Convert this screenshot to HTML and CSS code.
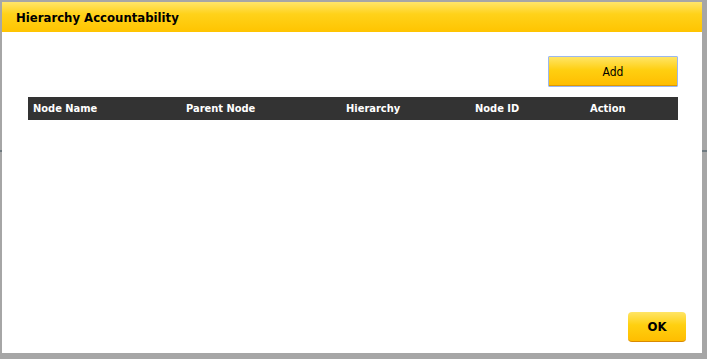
FILE: index.html
```html
<!DOCTYPE html>
<html>
<head>
<meta charset="utf-8">
<link rel="stylesheet" href="styles.css">
</head>
<body>
<div class="dialog">
  <div class="dialog-header">Hierarchy Accountability</div>
  <div class="dialog-body">
    <div class="toolbar">
      <button class="btn-add">Add</button>
    </div>
    <div class="table-head">
      <div class="col c1">Node Name</div>
      <div class="col c2">Parent Node</div>
      <div class="col c3">Hierarchy</div>
      <div class="col c4">Node ID</div>
      <div class="col c5">Action</div>
    </div>
    <div class="table-body"></div>
    <div class="footer">
      <button class="btn-ok">OK</button>
    </div>
  </div>
</div>
</body>
</html>
```
FILE: styles.css
```css
html, body {
  margin: 0;
  padding: 0;
}
body {
  width: 707px;
  height: 359px;
  background:
    linear-gradient(to bottom, transparent 150px, #6f7a80 150px, #6f7a80 152px, transparent 152px),
    #a6a6a6;
  font-family: "DejaVu Sans Condensed", "DejaVu Sans", sans-serif;
  overflow: hidden;
}
.dialog {
  margin: 2px 0 0 2px;
  width: 700px;
  height: 351px;
  background: #fff;
  display: flex;
  flex-direction: column;
}
.dialog-header {
  height: 30px;
  box-sizing: border-box;
  padding-left: 14px;
  display: flex;
  align-items: center;
  font-size: 13px;
  font-weight: bold;
  color: #000;
  background: linear-gradient(to bottom, #ffe56a 0%, #ffd21a 40%, #ffc400 100%);
}
.dialog-body {
  flex: 1;
  display: flex;
  flex-direction: column;
  padding: 24px 16px 11px 26px;
}
.toolbar {
  display: flex;
  justify-content: flex-end;
  padding-right: 8px;
}
.btn-add {
  width: 130px;
  height: 31px;
  border: 1px solid #9cb8ef;
  border-radius: 1px;
  background: linear-gradient(to bottom, #ffe566 0%, #ffcf10 45%, #ffbd00 100%);
  box-shadow: inset 0 -1px 0 #e09a00;
  font-family: inherit;
  font-size: 12px;
  color: #000;
  padding: 0;
}
.table-head {
  margin-top: 10px;
  width: 650px;
  height: 23px;
  background: #333333;
  display: flex;
  align-items: center;
  color: #fff;
  font-size: 11px;
  font-weight: bold;
}
.col {
  box-sizing: border-box;
  padding-left: 5px;
}
.c1 { width: 153px; }
.c2 { width: 160px; }
.c3 { width: 129px; }
.c4 { width: 115px; }
.c5 { width: 93px; }
.table-body {
  flex: 1;
}
.footer {
  display: flex;
  justify-content: flex-end;
}
.btn-ok {
  width: 58px;
  height: 30px;
  border: none;
  border-bottom: 1px solid #d98a00;
  border-radius: 4px;
  background: linear-gradient(to bottom, #ffe566 0%, #ffd010 45%, #ffbd00 100%);
  font-family: inherit;
  font-size: 13px;
  font-weight: bold;
  color: #000;
  padding: 0;
}
```
